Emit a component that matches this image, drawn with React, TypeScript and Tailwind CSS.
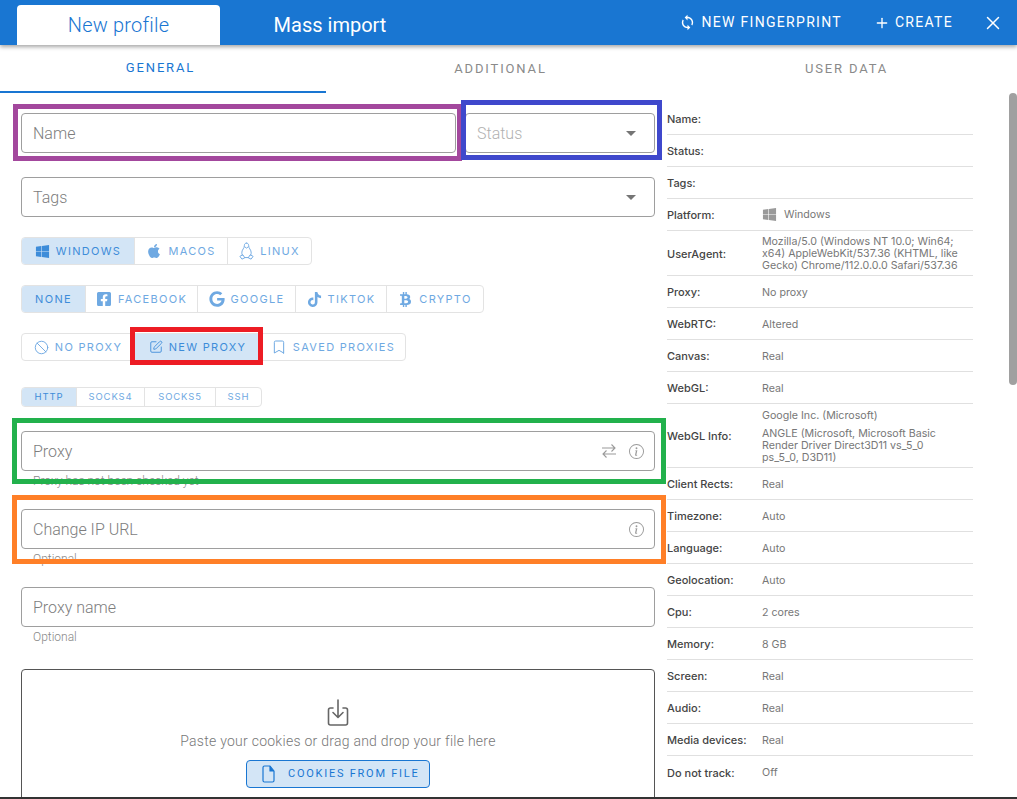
import React from "react";
import { Ban, SquarePen, Bookmark, Plus, X } from "lucide-react";
import { FaWindows, FaApple, FaGoogle, FaTiktok, FaBtc, FaFacebookSquare } from "react-icons/fa";
import { MdSync } from "react-icons/md";
import { BsInfoCircle } from "react-icons/bs";

const Caret = () => (
  <svg width="10" height="5" viewBox="0 0 10 5" className="fill-[#757575] shrink-0"><path d="M0 0h10L5 5z" /></svg>
);

const Tux = () => (
  <svg width="15" height="18" viewBox="0 0 16 19" fill="none" stroke="currentColor" strokeWidth="1" strokeLinejoin="round" strokeLinecap="round">
    <path d="M8 1C6.500 1 5.700 2.200 5.700 3.800c0 1.500-.4 2.300-1.200 3.400C3.500 8.600 3 10 3 11.500c0 1 .3 2 1 2.700" />
    <path d="M8 1c1.500 0 2.300 1.200 2.300 2.800 0 1.500.4 2.300 1.200 3.400 1 1.400 1.500 2.800 1.500 4.300 0 1-.3 2-1 2.700" />
    <path d="M6.300 5.200 8 6.400l1.700-1.200" />
    <path d="M1.300 15 4 13.500l2.200 3.200-2.700 1.300zM14.700 15 12 13.500l-2.200 3.200 2.700 1.300zM6.200 16.500h3.600" />
  </svg>
);

const Input = ({ label, right, className = "", caret }: { label: string; right?: React.ReactNode; className?: string; caret?: boolean }) => (
  <div className={`h-10 shrink-0 flex items-center justify-between pl-[11px] pr-[18px] border border-[#9e9e9e] rounded-[4px] bg-white ${className}`}>
    <span className="text-[16px] font-light text-[#7d7d7d] font-['Roboto',sans-serif] translate-y-[1px]">{label}</span>
    {caret ? <Caret /> : right}
  </div>
);

type Seg = { label: string; w: string; icon?: React.ReactNode; active?: boolean };

const Group = ({ items, small }: { items: Seg[]; small?: boolean }) => (
  <div className={`inline-flex self-start shrink-0 border border-[#e3e3e3] rounded-[4px] overflow-hidden ${small ? "h-5" : "h-7"}`}>
    {items.map((s, i) => (
      <div
        key={s.label}
        className={`flex items-center justify-center gap-[6px] ${s.w} ${i ? "border-l border-[#e3e3e3]" : ""} ${s.active ? "bg-[#d3e5f6] text-[#3d8cd9]" : "text-[#6fa9e2]"} ${small ? "text-[9.5px] tracking-[0.85px]" : "text-[11px] tracking-[1.3px]"}`}
      >
        {s.icon}
        <span>{s.label}</span>
      </div>
    ))}
  </div>
);

const Row = ({ k, children, h = "h-8" }: { k: string; children?: React.ReactNode; h?: string }) => (
  <div className={`flex items-center ${h} border-b border-[#e0e0e0]`}>
    <div className="w-[95px] shrink-0 text-[11px] font-medium text-[#444] translate-y-[1px]">{k}</div>
    <div className="flex-1 text-[10.65px] leading-[12px] text-[#777] translate-y-[1px]">{children}</div>
  </div>
);

const Helper = ({ children }: { children: React.ReactNode }) => (
  <div className="mt-[3px] h-[14px] shrink-0 pl-3 text-[12px] leading-[14px] font-light text-[#888] font-['Roboto',sans-serif]">{children}</div>
);

const Box = ({ className }: { className: string }) => <div className={`absolute pointer-events-none ${className}`} />;

export default function App() {
  return (
    <div className="relative h-[799px] w-[1017px] overflow-hidden bg-white flex flex-col font-['Inter',sans-serif]">
      <header className="h-[45px] shrink-0 bg-[#1976d2] shadow-[0_2px_4px_rgba(0,0,0,0.35)] flex items-end pl-[17px] relative z-10 font-['Roboto',sans-serif]">
        <div className="w-[203px] h-10 bg-white rounded-t-[4px] flex items-center justify-center text-[20px] tracking-[0.2px] font-light text-[#1976d2]">New profile</div>
        <div className="w-[220px] h-10 flex items-center justify-center text-[20px] text-white">Mass import</div>
        <div className="ml-auto self-stretch flex items-center text-white text-[14px] tracking-[1.3px]">
          <MdSync size={17} className="mr-[6px]" />
          <span>NEW FINGERPRINT</span>
          <Plus size={16} className="ml-[32px] mr-[5px]" />
          <span>CREATE</span>
          <X size={22} strokeWidth={1.6} className="ml-[29px] mr-[13px]" />
        </div>
      </header>

      <nav className="h-[48px] shrink-0 flex text-[13px] tracking-[1.85px] text-[#8a8a8a] font-['Roboto',sans-serif]">
        <div className="w-[326px] flex items-center justify-center text-[#1976d2] border-b-2 border-[#1976d2] pr-[5px]">GENERAL</div>
        <div className="w-[346px] flex items-center justify-center pl-[3px]">ADDITIONAL</div>
        <div className="flex-1 flex items-center justify-center pl-[4px]">USER DATA</div>
      </nav>

      <main className="flex-1 min-h-0 flex relative overflow-hidden">
        <section className="w-[634px] ml-[21px] pt-5 flex flex-col shrink-0">
          <div className="flex gap-[9px] shrink-0">
            <Input label="Name" className="flex-1" />
            <Input label="Status" caret className="w-[190px] [&>span]:opacity-60" />
          </div>
          <Input label="Tags" caret className="mt-6" />

          <div className="mt-5 flex flex-col shrink-0">
            <Group items={[
              { label: "WINDOWS", w: "w-[112px]", active: true, icon: <FaWindows size={15} /> },
              { label: "MACOS", w: "w-[93px]", icon: <FaApple size={16} /> },
              { label: "LINUX", w: "w-[84px]", icon: <Tux /> },
            ]} />
            <div className="mt-5 flex flex-col">
              <Group items={[
                { label: "NONE", w: "w-[63px]", active: true },
                { label: "FACEBOOK", w: "w-[112px]", icon: <FaFacebookSquare size={16} /> },
                { label: "GOOGLE", w: "w-[98px]", icon: <FaGoogle size={16} /> },
                { label: "TIKTOK", w: "w-[91px]", icon: <FaTiktok size={15} /> },
                { label: "CRYPTO", w: "w-[97px]", icon: <FaBtc size={15} /> },
              ]} />
            </div>
            <div className="mt-5 flex flex-col">
              <Group items={[
                { label: "NO PROXY", w: "w-[112px]", icon: <Ban size={15} strokeWidth={1.5} /> },
                { label: "NEW PROXY", w: "w-[126px]", active: true, icon: <SquarePen size={14} strokeWidth={1.5} /> },
                { label: "SAVED PROXIES", w: "w-[145px]", icon: <Bookmark size={16} strokeWidth={1.5} /> },
              ]} />
            </div>
            <div className="mt-[26px] flex flex-col">
              <Group small items={[
                { label: "HTTP", w: "w-[54px]", active: true },
                { label: "SOCKS4", w: "w-[68px]" },
                { label: "SOCKS5", w: "w-[71px]" },
                { label: "SSH", w: "w-[46px]" },
              ]} />
            </div>
          </div>

          <Input
            label="Proxy"
            className="mt-6 !pr-[10px]"
            right={
              <div className="flex items-center gap-[12px] text-[#9a9a9a]">
                <svg width="16" height="16" viewBox="0 0 16 16" fill="none" stroke="currentColor" strokeWidth="1.1">
                  <path d="M1 5h13M10.500 1.500 14 5l-3.500 3.500M15 11H2M5.500 7.500 2 11l3.500 3.500" />
                </svg>
                <BsInfoCircle size={15} />
              </div>
            }
          />
          <Helper>Proxy has not been checked yet</Helper>
          <Input label="Change IP URL" className="mt-[21px] !pr-[10px]" right={<BsInfoCircle size={15} className="text-[#9a9a9a]" />} />
          <Helper>Optional</Helper>
          <Input label="Proxy name" className="mt-[21px]" />
          <Helper>Optional</Helper>

          <div className="mt-[25px] h-[160px] shrink-0 border border-[#555] rounded-[4px] flex flex-col items-center pt-[29px]">
            <svg width="24" height="28" viewBox="0 0 24 28" fill="none" stroke="#666" strokeWidth="1.6" strokeLinecap="round" strokeLinejoin="round">
              <path d="M7 9H4.500A2 2 0 0 0 2.500 11v13a2 2 0 0 0 2 2h15a2 2 0 0 0 2-2V11a2 2 0 0 0-2-2H17" />
              <path d="M12 1v17M7 13.500l5 5 5-5" />
            </svg>
            <div className="mt-[4px] text-[14px] font-light text-[#777] font-['Roboto',sans-serif] leading-[20px] tracking-[0.26px]">Paste your cookies or drag and drop your file here</div>
            <div className="mt-[9px] w-[184px] h-7 flex items-center pl-[15px] gap-[13px] bg-[#d3e5f6] border border-[#1976d2] rounded-[4px] text-[11px] tracking-[1.75px] text-[#1976d2] font-['Roboto',sans-serif]">
              <svg width="13" height="18" viewBox="0 0 13 18" fill="none" stroke="#1976d2" strokeWidth="1.2" strokeLinejoin="round">
                <path d="M2.500 1H8l4 5v9.500a1.500 1.500 0 0 1-1.500 1.500h-8A1.500 1.500 0 0 1 1 15.500v-13A1.500 1.500 0 0 1 2.500 1z" />
                <path d="M8 1v5h4" fill="#1976d2" />
              </svg>
              <span>COOKIES FROM FILE</span>
            </div>
          </div>
        </section>

        <aside className="ml-3 w-[306px] pt-[10px] shrink-0">
          <Row k="Name:" />
          <Row k="Status:" />
          <Row k="Tags:" />
          <Row k="Platform:">
            <span className="flex items-center gap-[7px] -mt-[2px]"><FaWindows size={15} className="text-[#9a9a9a]" />Windows</span>
          </Row>
          <Row k="UserAgent:" h="h-[45px]">Mozilla/5.0 (Windows NT 10.0; Win64; x64) AppleWebKit/537.36 (KHTML, like Gecko) Chrome/112.0.0.0 Safari/537.36</Row>
          <Row k="Proxy:">No proxy</Row>
          <Row k="WebRTC:">Altered</Row>
          <Row k="Canvas:">Real</Row>
          <Row k="WebGL:">Real</Row>
          <Row k="WebGL Info:" h="h-[64px]">
            <div className="mb-[6px]">Google Inc. (Microsoft)</div>
            <div className="w-[190px]">ANGLE (Microsoft, Microsoft Basic Render Driver Direct3D11 vs_5_0 ps_5_0, D3D11)</div>
          </Row>
          <Row k="Client Rects:">Real</Row>
          <Row k="Timezone:">Auto</Row>
          <Row k="Language:">Auto</Row>
          <Row k="Geolocation:">Auto</Row>
          <Row k="Cpu:">2 cores</Row>
          <Row k="Memory:">8 GB</Row>
          <Row k="Screen:">Real</Row>
          <Row k="Audio:">Real</Row>
          <Row k="Media devices:">Real</Row>
          <div className="flex items-center h-8">
            <div className="w-[95px] shrink-0 text-[11px] font-medium text-[#444] translate-y-[1px]">Do not track:</div>
            <div className="flex-1 text-[10.65px] leading-[12px] text-[#777] translate-y-[1px]">Off</div>
          </div>
        </aside>

        <div className="absolute right-0 top-0 w-2 h-[292px] rounded-t-[4px] rounded-b-[4px] bg-[#a0a0a0]" />
      </main>

      <div className="h-[2px] shrink-0 bg-[#333] relative z-10" />

      <Box className="left-[13px] top-[104px] w-[449px] h-[57px] border-[5px] border-[#a3489d]" />
      <Box className="left-[461px] top-[100px] w-[201px] h-[60px] border-[5px] border-[#3f48cc]" />
      <Box className="left-[130px] top-[327px] w-[133px] h-[38px] border-[5px] border-[#ed1c24]" />
      <Box className="left-[12px] top-[418px] w-[654px] h-[66px] border-[5px] border-[#22b14c]" />
      <Box className="left-[12px] top-[495px] w-[654px] h-[69px] border-[5px] border-[#ff7f27]" />
    </div>
  );
}
